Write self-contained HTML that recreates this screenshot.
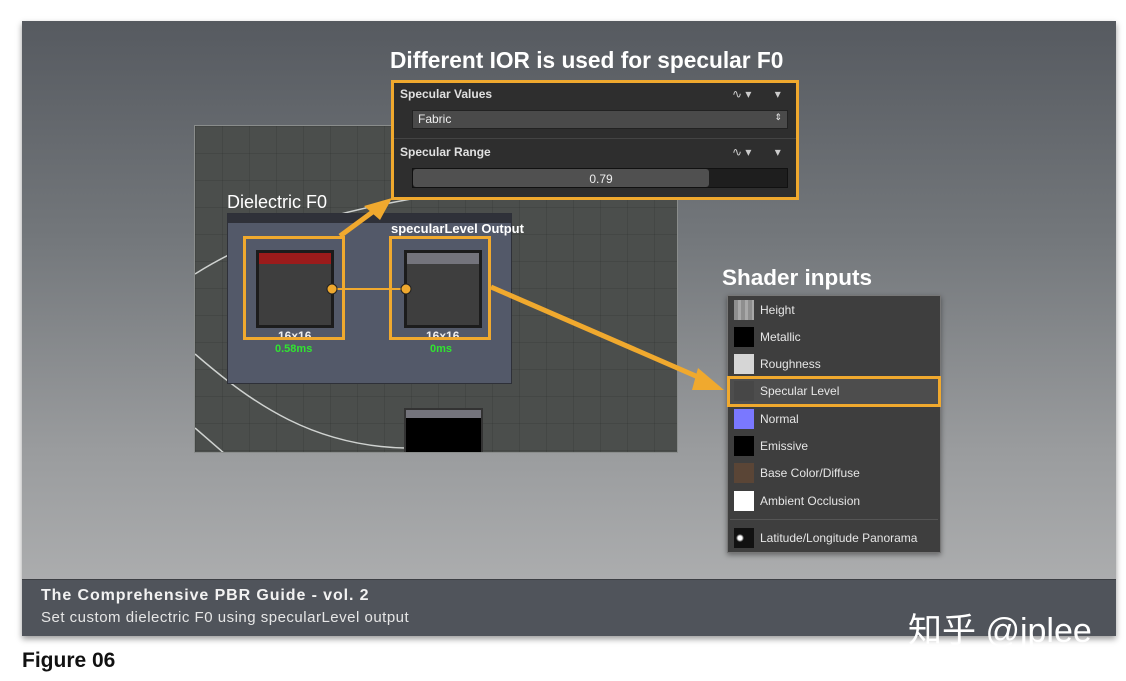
<!DOCTYPE html>
<html><head><meta charset="utf-8"><style>
*{margin:0;padding:0;box-sizing:border-box}
body{width:1126px;height:681px;background:#fff;position:relative;overflow:hidden;font-family:"Liberation Sans",Arial,sans-serif}
.a{position:absolute}
#main{left:22px;top:21px;width:1094px;height:615px;background:linear-gradient(#565a60 0%,#73777b 35%,#9a9c9e 70%,#b3b4b5 100%);box-shadow:0 3px 6px rgba(0,0,0,.4)}
#foot{left:22px;top:579px;width:1094px;height:57px;background:#50545b;border-top:1px solid #3c3f44}
#graph{left:194px;top:125px;width:484px;height:328px;background-color:#4b4e4c;background-image:linear-gradient(rgba(0,0,0,.09) 1px,transparent 1px),linear-gradient(90deg,rgba(0,0,0,.09) 1px,transparent 1px);background-size:27px 27px;border:1px solid #8a8d8c;overflow:hidden}
.ob{border:3px solid #f0a92e}
.t{color:#fff;font-weight:bold}
.row{position:absolute;left:4px;height:25px;width:206px;font-size:12px;color:#e6e6e6}
.sw{position:absolute;left:2px;top:2px;width:20px;height:20px}
.row span{position:absolute;left:28px;top:5px}
</style></head><body>
<div id="main" class="a"></div>
<div class="a t" style="left:390px;top:47px;font-size:22.7px;">Different IOR is used for specular F0</div>

<div id="graph" class="a">
<svg width="484" height="328" style="position:absolute;left:0;top:0">
<path d="M0 148 C60 110 150 75 330 58" stroke="#cfd2d0" stroke-width="1.5" fill="none"/>
<path d="M0 228 C60 280 120 320 210 322" stroke="#cfd2d0" stroke-width="1.5" fill="none"/>
<path d="M0 302 L30 328" stroke="#cfd2d0" stroke-width="1.5" fill="none"/>
</svg>
<div class="a" style="left:32px;top:87px;width:285px;height:171px;background:#535969;border:1px solid #2e3038"><div style="height:9px;background:#2f3139"></div></div>
<div class="a" style="left:61px;top:124px;width:78px;height:78px;background:#1c1c1c;padding:3px"><div style="background:#3e3e3e;height:100%"><div style="height:11px;background:#9b1b1b"></div></div></div>
<div class="a" style="left:209px;top:124px;width:78px;height:78px;background:#1c1c1c;padding:3px"><div style="background:#3e3e3e;height:100%"><div style="height:11px;background:#74747c"></div></div></div>
<div class="a t" style="left:83px;top:203px;font-size:12px;color:#eee">16x16</div>
<div class="a t" style="left:80px;top:217px;font-size:11px;color:#31e431">0.58ms</div>
<div class="a t" style="left:231px;top:203px;font-size:12px;color:#eee">16x16</div>
<div class="a t" style="left:235px;top:217px;font-size:11px;color:#31e431">0ms</div>
<div class="a" style="left:209px;top:282px;width:79px;height:50px;background:#000;border:2px solid #333"><div style="height:8px;background:#74747c"></div></div>
</div>

<div class="a" style="left:227px;top:192px;font-size:18px;color:#fff">Dielectric F0</div>
<div class="a t" style="left:391px;top:221px;font-size:13px">specularLevel Output</div>
<div class="a ob" style="left:243px;top:236px;width:102px;height:104px"></div>
<div class="a ob" style="left:389px;top:236px;width:102px;height:104px"></div>

<svg class="a" style="left:0;top:0" width="1126" height="681">
<line x1="336" y1="289" x2="401" y2="289" stroke="#f0a92e" stroke-width="2"/>
<circle cx="332" cy="289" r="5" fill="#f0a92e" stroke="#222"/>
<circle cx="406" cy="289" r="5" fill="#f0a92e" stroke="#222"/>
<path d="M340 236 L378 208" stroke="#f0a92e" stroke-width="5"/>
<path d="M392 198 L364 206 L380 220 Z" fill="#f0a92e"/>
<path d="M491 287 L705 380" stroke="#f0a92e" stroke-width="5"/>
<path d="M724 390 L698 368 L692 390 Z" fill="#f0a92e"/>
</svg>

<div class="a ob" style="left:391px;top:80px;width:408px;height:120px;background:#2e2e2e">
<div class="a t" style="left:6px;top:4px;font-size:12px;color:#e0e0e0">Specular Values</div>
<div class="a" style="left:338px;top:4px;font-size:12px;color:#ccc">∿ ▾&nbsp;&nbsp;&nbsp;&nbsp;&nbsp;&nbsp;&nbsp;▾</div>
<div class="a" style="left:18px;top:27px;width:376px;height:19px;background:#4a4a4a;border:1px solid #222;font-size:12px;color:#eee;padding:1px 5px">Fabric<span style="float:right;font-size:9px">⇕</span></div>
<div class="a" style="left:0;top:55px;width:402px;height:1px;background:#444"></div>
<div class="a t" style="left:6px;top:62px;font-size:12px;color:#e0e0e0">Specular Range</div>
<div class="a" style="left:338px;top:62px;font-size:12px;color:#ccc">∿ ▾&nbsp;&nbsp;&nbsp;&nbsp;&nbsp;&nbsp;&nbsp;▾</div>
<div class="a" style="left:18px;top:85px;width:376px;height:20px;background:#1e1e1e;border:1px solid #111"><div style="width:296px;height:100%;background:#505050;border-radius:3px"></div><div class="a" style="left:0;top:3px;width:376px;text-align:center;font-size:12px;color:#eee">0.79</div></div>
</div>

<div class="a t" style="left:722px;top:265px;font-size:22.5px">Shader inputs</div>
<div class="a" style="left:727px;top:295px;width:214px;height:258px;background:#3e3e3e;border:1px solid #777;box-shadow:0 2px 5px rgba(0,0,0,.4)">
<div class="row" style="top:2px"><div class="sw" style="background:repeating-linear-gradient(90deg,#8e8e8e 0 4px,#a8a8a8 4px 7px)"></div><span>Height</span></div>
<div class="row" style="top:29px"><div class="sw" style="background:#000"></div><span>Metallic</span></div>
<div class="row" style="top:56px"><div class="sw" style="background:#d6d6d6"></div><span>Roughness</span></div>
<div class="row" style="top:83px"><div class="sw" style="background:#383838"></div><span>Specular Level</span></div>
<div class="row" style="top:111px"><div class="sw" style="background:#7a78ff"></div><span>Normal</span></div>
<div class="row" style="top:138px"><div class="sw" style="background:#000"></div><span>Emissive</span></div>
<div class="row" style="top:165px"><div class="sw" style="background:#5a4536"></div><span>Base Color/Diffuse</span></div>
<div class="row" style="top:193px"><div class="sw" style="background:#fff"></div><span>Ambient Occlusion</span></div>
<div class="a" style="left:2px;top:223px;width:208px;height:1px;background:#555"></div>
<div class="row" style="top:230px"><div class="sw" style="background:radial-gradient(circle at 30% 50%,#fff 0 2px,#111 4px)"></div><span>Latitude/Longitude Panorama</span></div>
</div>
<div class="a ob" style="left:727px;top:376px;width:214px;height:31px;background:rgba(255,255,255,.08)"></div>

<div id="foot" class="a"></div>
<div class="a t" style="left:41px;top:587px;font-size:16px;letter-spacing:0.9px;color:#f2f2f2">The Comprehensive PBR Guide - vol. 2</div>
<div class="a" style="left:41px;top:609px;font-size:15px;letter-spacing:0.5px;color:#e6e6e6">Set custom dielectric F0 using specularLevel output</div>
<div class="a" style="left:908px;top:603px;font-size:34px;color:#fff;font-family:'Liberation Sans','Noto Sans CJK SC',sans-serif">知乎 @jplee</div>
<div class="a t" style="left:22px;top:649px;font-size:21px;color:#111">Figure 06</div>
</body></html>
